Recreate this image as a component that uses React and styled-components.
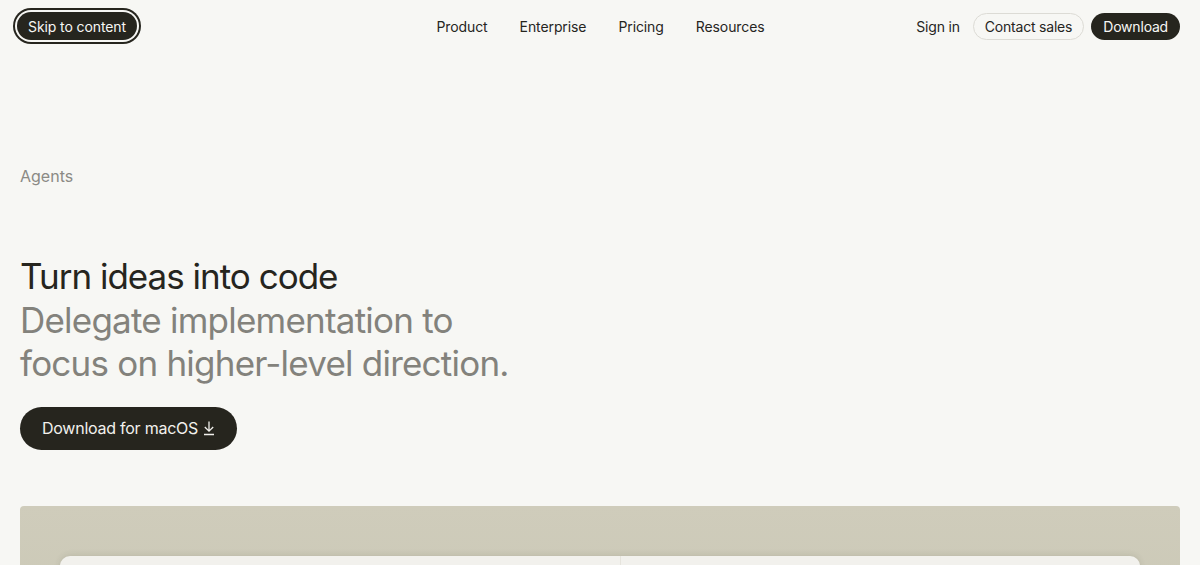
import React from "react";
import styled, { createGlobalStyle } from "styled-components";

const Global = createGlobalStyle`
  html, body { margin: 0; padding: 0; background: #f7f7f4; }
  body { font-family: Inter, "Noto Sans", "Liberation Sans", sans-serif; color: #26251e; -webkit-font-smoothing: antialiased; }
  * { box-sizing: border-box; }
`;

const Page = styled.div`
  width: 1200px;
  height: 565px;
  overflow: hidden;
`;

const Header = styled.header`
  height: 52px;
  padding: 0 20px 0 17px;
  display: grid;
  grid-template-columns: 1fr auto 1fr;
  align-items: center;
`;

const SkipLink = styled.a`
  justify-self: start;
  display: inline-flex;
  align-items: center;
  height: 28px;
  padding: 0 11px;
  border-radius: 14px;
  background: #26251e;
  color: #f7f7f4;
  font-size: 14px;
  letter-spacing: -0.1px;
  text-decoration: none;
  box-shadow: 0 0 0 2px #f7f7f4, 0 0 0 4px #26251e;
`;

const Nav = styled.nav`
  display: flex;
  gap: 32px;
  margin-left: 4px;
`;

const NavLink = styled.a`
  font-size: 14px;
  letter-spacing: -0.1px;
  color: #26251e;
  text-decoration: none;
`;

const Actions = styled.div`
  justify-self: end;
  display: flex;
  align-items: center;
  gap: 7px;
`;

const Pill = styled.a`
  display: inline-flex;
  align-items: center;
  height: 27px;
  padding: 0 ${(p) => (p.$plain ? "5px" : "11px")};
  border-radius: 14px;
  font-size: 14px;
  letter-spacing: -0.2px;
  text-decoration: none;
  color: ${(p) => (p.$dark ? "#f7f7f4" : "#26251e")};
  background: ${(p) => (p.$dark ? "#26251e" : "transparent")};
  border: 1px solid ${(p) => (p.$outline ? "#dcdbd5" : "transparent")};
`;

const Hero = styled.section`
  padding: 113px 20px 0;
`;

const Eyebrow = styled.div`
  font-size: 16px;
  color: #8b8a85;
  line-height: 22px;
`;

const Title = styled.h1`
  margin: 68px 0 0;
  font-size: 35px;
  font-weight: 400;
  line-height: 43.5px;
  letter-spacing: -1px;
  color: #26251e;
`;

const Sub = styled.span`
  display: block;
  color: #83827c;
  letter-spacing: -0.78px;
  max-width: 500px;
`;

const CTA = styled.a`
  margin-top: 21px;
  display: inline-flex;
  align-items: center;
  gap: 4px;
  height: 43px;
  padding: 0 21px 0 22px;
  border-radius: 22px;
  background: #26251e;
  color: #f2f1ed;
  font-size: 16px;
  letter-spacing: -0.25px;
  text-decoration: none;
`;

const Showcase = styled.div`
  margin: 56px 20px 0;
  height: 200px;
  border-radius: 4px;
  background: linear-gradient(180deg, #cfccbb 0%, #c8c6b3 100%);
  padding: 50px 40px 0;
`;

const Window = styled.div`
  height: 100%;
  border-radius: 10px;
  background: #f2f1ed;
  box-shadow: 0 -1px 6px rgba(60, 58, 40, 0.12);
  display: grid;
  grid-template-columns: 560px 1fr;
`;

const Pane = styled.div`
  border-left: ${(p) => (p.$divided ? "1px solid #e6e4dd" : "none")};
`;

function DownIcon() {
  return (
    <svg width="14" height="16" viewBox="0 0 14 16" fill="none" stroke="currentColor" strokeWidth="1.3">
      <path d="M7 1.5v9.5M2.8 7l4.2 4.2L11.2 7M2 14.5h10" />
    </svg>
  );
}

export default function App() {
  return (
    <Page>
      <Global />
      <Header>
        <SkipLink href="#">Skip to content</SkipLink>
        <Nav>
          <NavLink href="#">Product</NavLink>
          <NavLink href="#">Enterprise</NavLink>
          <NavLink href="#">Pricing</NavLink>
          <NavLink href="#">Resources</NavLink>
        </Nav>
        <Actions>
          <Pill $plain href="#">Sign in</Pill>
          <Pill $outline href="#">Contact sales</Pill>
          <Pill $dark href="#">Download</Pill>
        </Actions>
      </Header>
      <Hero>
        <Eyebrow>Agents</Eyebrow>
        <Title>
          Turn ideas into code
          <Sub>Delegate implementation to focus on higher-level direction.</Sub>
        </Title>
        <CTA href="#">
          Download for macOS <DownIcon />
        </CTA>
      </Hero>
      <Showcase>
        <Window>
          <Pane />
          <Pane $divided />
        </Window>
      </Showcase>
    </Page>
  );
}
